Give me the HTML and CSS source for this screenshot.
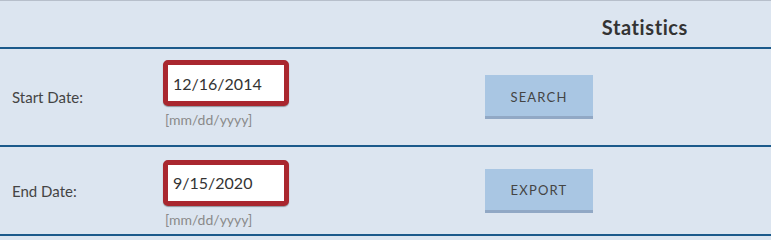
FILE: index.html
```html
<!DOCTYPE html>
<html>
<head>
<meta charset="utf-8">
<link rel="stylesheet" href="styles.css">
</head>
<body>
<div class="panel">
  <div class="header">
    <h2 class="title">Statistics</h2>
  </div>
  <div class="row row-first">
    <label class="label">Start Date:</label>
    <div class="field">
      <div class="input">12/16/2014</div>
      <div class="hint">[mm/dd/yyyy]</div>
    </div>
    <div class="action"><button class="btn">SEARCH</button></div>
  </div>
  <div class="row row-second">
    <label class="label">End Date:</label>
    <div class="field">
      <div class="input">9/15/2020</div>
      <div class="hint">[mm/dd/yyyy]</div>
    </div>
    <div class="action"><button class="btn">EXPORT</button></div>
  </div>
</div>
</body>
</html>
```
FILE: styles.css
```css
html, body {
  margin: 0;
  padding: 0;
  background: #dce5f0;
}
body {
  font-family: Lato, "Open Sans", sans-serif;
  color: #444;
}
.panel {
  border-top: 1px solid #b7bfcb;
  width: 771px;
}
.header {
  height: 46px;
  display: flex;
  align-items: center;
  justify-content: flex-end;
  padding-right: 83px;
  border-bottom: 2px solid #1b5a8b;
}
.title {
  margin: 0;
  font-size: 20px;
  font-weight: 700;
  letter-spacing: 0.6px;
  color: #333;
  padding-top: 6px;
}
.row {
  display: grid;
  grid-template-columns: 163px 322px 1fr;
  align-items: center;
  border-bottom: 2px solid #1b5a8b;
}
.row-first { height: 96px; }
.row-second { height: 87px; }
.label {
  padding-left: 12px;
  font-size: 15px;
  color: #444;
}
.row-first .field { padding-bottom: 6px; }
.row-second .field { padding-top: 6px; }
.field {
  display: flex;
  flex-direction: column;
  align-items: flex-start;
}
.input {
  box-sizing: border-box;
  width: 126px;
  height: 46px;
  border: 5px solid #a9272f;
  border-radius: 5px;
  background: #fff;
  box-shadow: 0 1px 1px rgba(0, 0, 0, 0.35);
  font-size: 16px;
  color: #333;
  padding: 0 0 0 5px;
  display: flex;
  align-items: center;
}
.hint {
  margin-top: 5px;
  padding-left: 2px;
  font-size: 14px;
  color: #8a8a8a;
}
.action {
  display: flex;
}
.btn {
  box-sizing: border-box;
  width: 108px;
  height: 44px;
  border: none;
  border-bottom: 3px solid #91a8c5;
  background: #a9c6e3;
  color: #444;
  font-family: Lato, "Open Sans", sans-serif;
  font-size: 13px;
  letter-spacing: 1.2px;
  padding: 2px 0 0 0;
}
```
